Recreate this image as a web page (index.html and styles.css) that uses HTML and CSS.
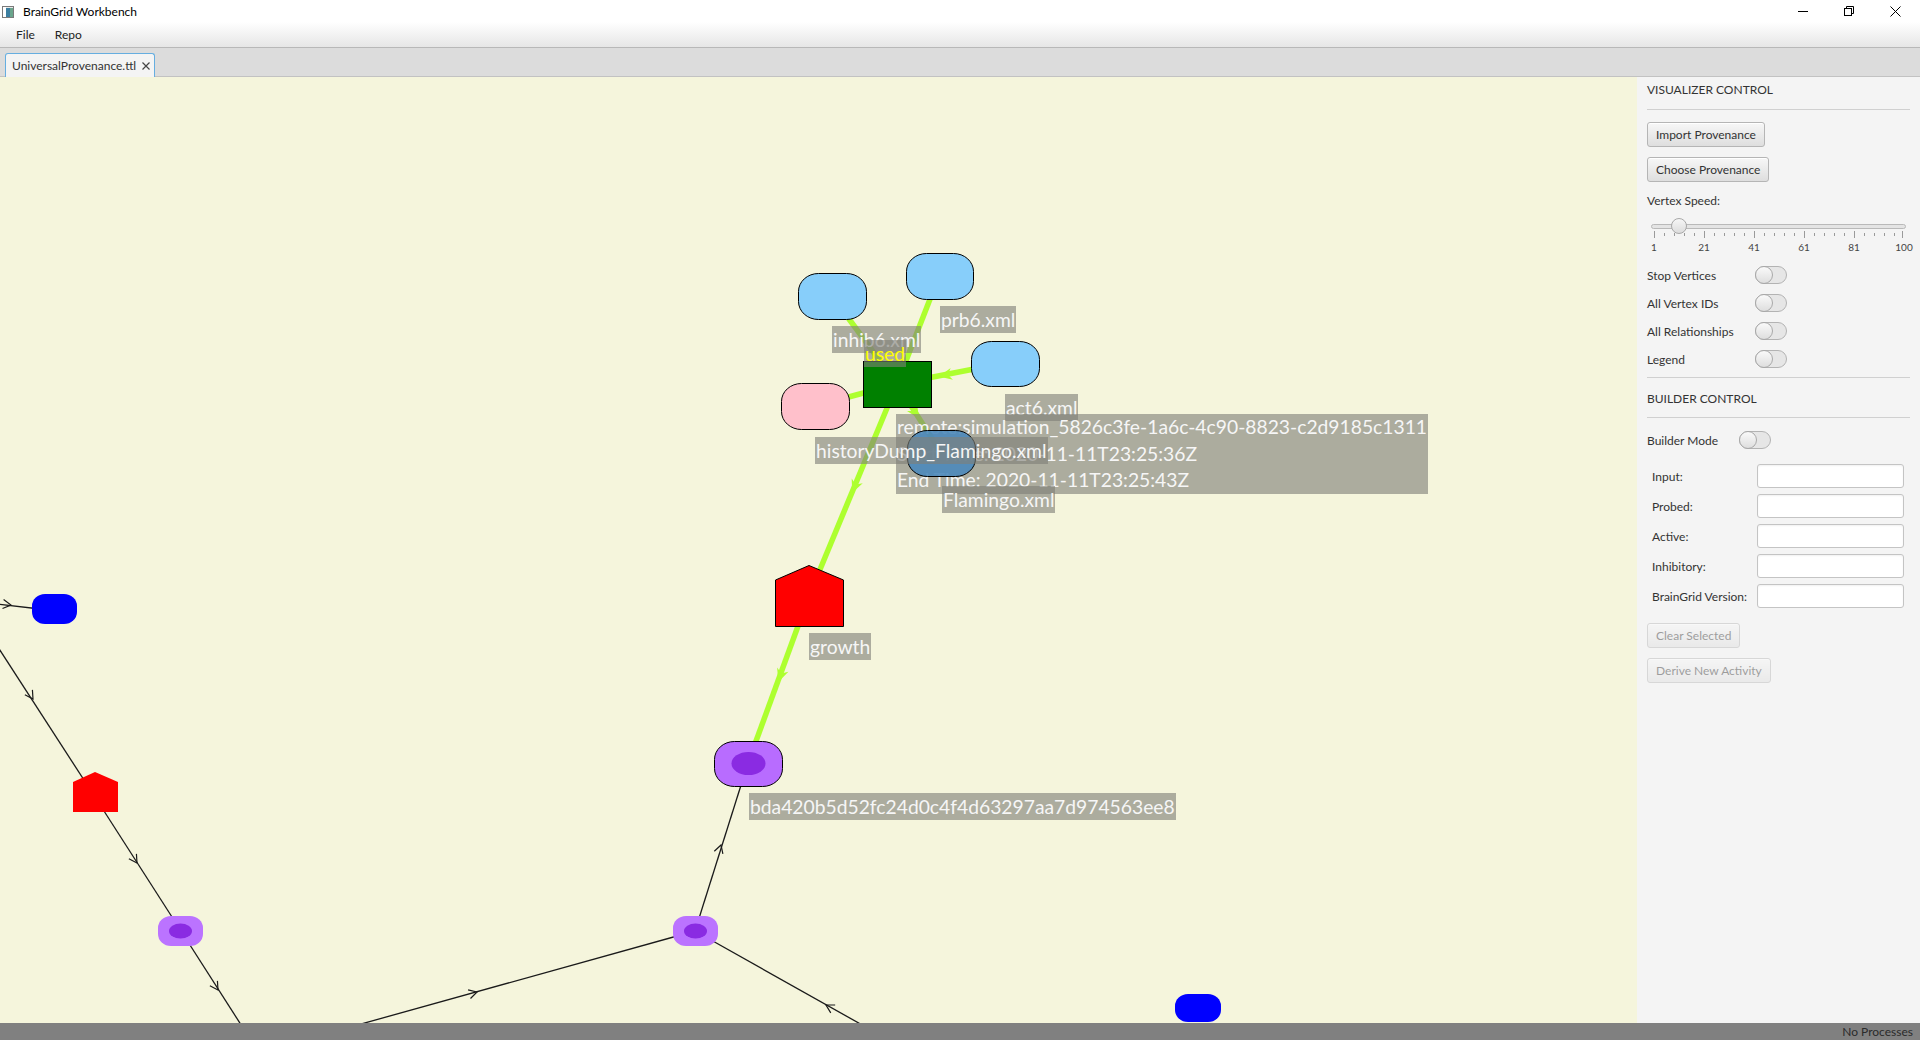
FILE: index.html
```html
<!DOCTYPE html>
<html>
<head>
<meta charset="utf-8">
<title>BrainGrid Workbench</title>
<link rel="stylesheet" href="styles.css">
</head>
<body>
<div class="app">
  <div class="titlebar">
    <svg class="app-icon" width="12" height="12" viewBox="0 0 12 12">
      <rect x="0.5" y="0.5" width="11" height="11" fill="#e8e8e8" stroke="#7a7a7a"/>
      <rect x="1" y="1" width="3" height="10" fill="#ffffff"/>
      <rect x="4" y="2" width="7" height="9" fill="#3c7fa0"/>
      <rect x="8" y="2" width="3" height="9" fill="#6aa58c"/>
    </svg>
    <span class="title">BrainGrid Workbench</span>
    <div class="win-controls">
      <span class="wc"><svg width="10" height="10" viewBox="0 0 10 10"><line x1="0" y1="5.5" x2="10" y2="5.5" stroke="#000" stroke-width="1"/></svg></span>
      <span class="wc"><svg width="10" height="10" viewBox="0 0 10 10"><rect x="0.5" y="2.5" width="7" height="7" fill="none" stroke="#000"/><path d="M2.5 2.5 V0.5 H9.5 V7.5 H7.5" fill="none" stroke="#000"/></svg></span>
      <span class="wc"><svg width="11" height="11" viewBox="0 0 11 11"><path d="M0.5 0.5 L10.5 10.5 M10.5 0.5 L0.5 10.5" stroke="#000" stroke-width="1"/></svg></span>
    </div>
  </div>
  <div class="menubar">
    <span class="menu">File</span>
    <span class="menu">Repo</span>
  </div>
  <div class="tabbar">
    <div class="tab">
      <span class="tab-text">UniversalProvenance.ttl</span>
      <svg class="tab-close" width="8" height="8" viewBox="0 0 8 8"><path d="M0.5 0.5 L7.5 7.5 M7.5 0.5 L0.5 7.5" stroke="#444" stroke-width="1.2"/></svg>
    </div>
  </div>
  <div class="main">
    <div class="canvas">
      <svg class="graph" width="1637" height="946" viewBox="0 0 1637 946">
        <defs>
          <path id="ga" d="M2 0 L-11 -6 L-7 0 L-11 6 Z" fill="#adff2f"/>
          <path id="ba" d="M-8 -4.5 L0 0 L-8 4.5" fill="none" stroke="#1a1a1a" stroke-width="1.2"/>
        </defs>
        <g stroke="#1a1a1a" stroke-width="1.3" fill="none">
          <line x1="-20" y1="525" x2="40" y2="532"/>
          <line x1="-30" y1="527" x2="95" y2="720"/>
          <line x1="95" y1="720" x2="181" y2="854"/>
          <line x1="181" y1="854" x2="245" y2="954"/>
          <line x1="300" y1="964" x2="695" y2="854"/>
          <line x1="695" y1="854" x2="748" y2="686"/>
          <line x1="695" y1="854" x2="880" y2="958"/>
        </g>
        <use href="#ba" transform="translate(11 528) rotate(7)"/>
        <use href="#ba" transform="translate(33 622) rotate(57)"/>
        <use href="#ba" transform="translate(137 786) rotate(57)"/>
        <use href="#ba" transform="translate(218 913) rotate(57)"/>
        <use href="#ba" transform="translate(477 915) rotate(-15.5)"/>
        <use href="#ba" transform="translate(721 768) rotate(-72.5)"/>
        <use href="#ba" transform="translate(826 928) rotate(-150.6)"/>

        <g stroke="#adff2f" stroke-width="5.5">
          <line x1="832" y1="219" x2="897" y2="307"/>
          <line x1="939" y1="199" x2="897" y2="307"/>
          <line x1="1005" y1="286" x2="897" y2="307"/>
          <line x1="815" y1="329" x2="897" y2="307"/>
          <line x1="897" y1="307" x2="942" y2="377"/>
          <line x1="897" y1="307" x2="809" y2="519"/>
          <line x1="809" y1="519" x2="748" y2="686"/>
        </g>
        <use href="#ga" transform="translate(853 414) rotate(112.5)"/>
        <use href="#ga" transform="translate(779 603) rotate(110)"/>
        <use href="#ga" transform="translate(918 340) rotate(57.5)"/>
        <use href="#ga" transform="translate(941 299) rotate(169)"/>

        <rect x="798.5" y="196.5" width="68" height="46" rx="20" ry="18" fill="#87cefa" stroke="#000"/>
        <rect x="906.5" y="176.5" width="67" height="46" rx="20" ry="18" fill="#87cefa" stroke="#000"/>
        <rect x="971.5" y="264.5" width="68" height="45" rx="20" ry="18" fill="#87cefa" stroke="#000"/>
        <rect x="781.5" y="306.5" width="68" height="46" rx="20" ry="18" fill="#ffc0cb" stroke="#000"/>
        <rect x="863.5" y="284.5" width="68" height="46" fill="#008000" stroke="#000"/>
        <polygon points="775.5,503 809,488.5 843.5,503 843.5,549.5 775.5,549.5" fill="#ff0000" stroke="#000"/>
        <rect x="714.5" y="664.5" width="68" height="45" rx="20" ry="18" fill="#b86cff" stroke="#000"/>
        <ellipse cx="748.5" cy="686.5" rx="17" ry="11.5" fill="#8a2be2"/>

        <rect x="32" y="517" width="45" height="30" rx="13" ry="12" fill="#0000ff"/>
        <polygon points="73,705 95,695 118,705 118,735 73,735" fill="#ff0000"/>
        <rect x="158" y="839" width="45" height="30" rx="13" ry="12" fill="#bb73ff"/>
        <ellipse cx="180.5" cy="854" rx="11.5" ry="7.5" fill="#8a2be2"/>
        <rect x="673" y="839" width="45" height="30" rx="13" ry="12" fill="#bb73ff"/>
        <ellipse cx="695.5" cy="854" rx="11.5" ry="7.5" fill="#8a2be2"/>
        <rect x="1175" y="917" width="46" height="28" rx="13" ry="12" fill="#0000ff"/>
      </svg>

      <div class="lbl" style="left:832px;top:249px">inhib6.xml</div>
      <div class="lbl used" style="left:864px;top:263px">used</div>
      <div class="lbl" style="left:940px;top:229px">prb6.xml</div>
      <div class="lbl" style="left:1005px;top:317px">act6.xml</div>
      <div class="lbl multi" style="left:896px;top:337px">remote:simulation_5826c3fe-1a6c-4c90-8823-c2d9185c1311<br>Start Time: 2020-11-11T23:25:36Z<br>End Time: 2020-11-11T23:25:43Z</div>
      <svg class="node-over" style="left:907px;top:353px" width="70" height="48" viewBox="0 0 70 48">
        <rect x="0.5" y="0.5" width="68" height="46" rx="20" ry="18" fill="#4b88ba" fill-opacity="0.9" stroke="#000"/>
      </svg>
      <div class="lbl" style="left:815px;top:360px">historyDump_Flamingo.xml</div>
      <div class="lbl" style="left:942px;top:409px">Flamingo.xml</div>
      <div class="lbl" style="left:809px;top:556px">growth</div>
      <div class="lbl" style="left:749px;top:716px">bda420b5d52fc24d0c4f4d63297aa7d974563ee8</div>
    </div>

    <aside class="panel">
      <div class="sec-title">VISUALIZER CONTROL</div>
      <div class="sep"></div>
      <button class="btn btn-first">Import Provenance</button>
      <button class="btn">Choose Provenance</button>
      <div class="speed-label">Vertex Speed:</div>
      <div class="slider">
        <div class="track"></div>
        <div class="thumb"></div>
        <svg class="ticks" width="263" height="7" viewBox="0 0 263 7">
          <g stroke="#9a9a9a" stroke-width="1">
            <path d="M7.5 0 V7 M57.5 0 V7 M107.5 0 V7 M157.5 0 V7 M207.5 0 V7 M255.5 0 V7"/>
            <path d="M17.5 2 V5 M27.5 2 V5 M37.5 2 V5 M47.5 2 V5 M67.5 2 V5 M77.5 2 V5 M87.5 2 V5 M97.5 2 V5 M117.5 2 V5 M127.5 2 V5 M137.5 2 V5 M147.5 2 V5 M167.5 2 V5 M177.5 2 V5 M187.5 2 V5 M197.5 2 V5 M217.5 2 V5 M227.5 2 V5 M237.5 2 V5 M247.5 2 V5"/>
          </g>
        </svg>
        <div class="tick-labels">
          <span>1</span><span>21</span><span>41</span><span>61</span><span>81</span><span>100</span>
        </div>
      </div>
      <div class="toggle-list">
        <div class="toggle-row"><span>Stop Vertices</span><span class="toggle"><span class="knob"></span></span></div>
        <div class="toggle-row"><span>All Vertex IDs</span><span class="toggle"><span class="knob"></span></span></div>
        <div class="toggle-row"><span>All Relationships</span><span class="toggle"><span class="knob"></span></span></div>
        <div class="toggle-row"><span>Legend</span><span class="toggle"><span class="knob"></span></span></div>
      </div>
      <div class="sep sep-a"></div>
      <div class="sec-title sec-b">BUILDER CONTROL</div>
      <div class="sep"></div>
      <div class="toggle-row builder"><span>Builder Mode</span><span class="toggle"><span class="knob"></span></span></div>
      <div class="field-grid">
        <label>Input:</label><input type="text" class="field">
        <label>Probed:</label><input type="text" class="field">
        <label>Active:</label><input type="text" class="field">
        <label>Inhibitory:</label><input type="text" class="field">
        <label>BrainGrid Version:</label><input type="text" class="field">
      </div>
      <button class="btn btn-disabled btn-clear">Clear Selected</button>
      <button class="btn btn-disabled">Derive New Activity</button>
    </aside>
  </div>
  <div class="statusbar">No Processes</div>
</div>
</body>
</html>
```
FILE: styles.css
```css
* { box-sizing: border-box; }
html, body { margin: 0; padding: 0; }
body {
  width: 1920px;
  height: 1040px;
  overflow: hidden;
  font-family: "Segoe UI", Lato, "Open Sans", sans-serif;
  font-size: 12px;
  color: #333;
  background: #f4f4f4;
}
.app { display: flex; flex-direction: column; height: 1040px; }

.titlebar {
  height: 22px;
  flex: 0 0 22px;
  background: #fff;
  display: flex;
  align-items: center;
}
.app-icon { margin-left: 2px; margin-top: 1px; }
.title { margin-left: 9px; color: #000; font-size: 12px; }
.win-controls { margin-left: auto; margin-right: 2px; display: flex; }
.wc { width: 46px; height: 22px; display: flex; align-items: center; justify-content: center; }

.menubar {
  flex: 0 0 26px;
  height: 26px;
  display: flex;
  align-items: center;
  padding-left: 6px;
  background: linear-gradient(#ffffff, #e6e6e6);
  border-bottom: 1px solid #b8b8b8;
}
.menu { padding: 0 10px; color: #222; }

.tabbar {
  flex: 0 0 29px;
  height: 29px;
  background: #dcdcdc;
  border-bottom: 1px solid #c2c2c2;
  padding: 5px 0 0 5px;
  display: flex;
  align-items: flex-start;
}
.tab {
  height: 24px;
  width: 150px;
  display: flex;
  align-items: center;
  padding-left: 6px;
  background: #f4f4f4;
  border: 1px solid #66aee0;
  border-bottom: none;
  border-radius: 3px 3px 0 0;
  color: #333;
}
.tab-close { margin-left: 6px; }

.main { flex: 1 1 auto; display: flex; min-height: 0; }
.canvas {
  flex: 0 0 1637px;
  width: 1637px;
  position: relative;
  overflow: hidden;
  background: #f5f5dc;
}
.graph { display: block; }
.node-over { position: absolute; }
.lbl {
  position: absolute;
  white-space: nowrap;
  background: rgba(128, 128, 120, 0.62);
  color: #f6f6f6;
  font-family: "Segoe UI", Lato, "Open Sans", sans-serif;
  font-size: 19.3px;
  line-height: 27px;
  padding: 0 1px;
}
.lbl.used { color: #ffff00; }
.lbl.multi { line-height: 26.5px; }

.panel {
  flex: 1 1 auto;
  background: #f4f4f4;
  padding: 5px 10px 0 10px;
  display: flex;
  flex-direction: column;
  align-items: flex-start;
}
.sec-title { line-height: 16px; height: 16px; color: #333; }
.sec-b { margin-top: 13px; }
.sep { align-self: stretch; height: 1px; background: #d0d0d0; margin-top: 11px; }
.sep-a { margin-top: 4px; }
.sec-b + .sep { margin-top: 10px; }

.btn {
  font-family: inherit;
  font-size: 12px;
  color: #333;
  height: 25px;
  padding: 0 8px;
  margin: 10px 0 0 0;
  border: 1px solid #b5b5b5;
  border-radius: 3px;
  background: linear-gradient(#f7f7f7, #dedede);
  box-shadow: inset 0 1px 0 #ffffff;
}
.btn-first { margin-top: 12px; }
.btn-disabled { opacity: 0.45; }
.btn-clear { margin-top: 15px; }

.speed-label { margin-top: 11px; line-height: 16px; }
.slider { position: relative; align-self: stretch; height: 40px; margin-top: 7px; }
.track {
  position: absolute;
  left: 4px; right: 4px; top: 8px;
  height: 5px;
  border-radius: 3px;
  background: #e4e4e4;
  border: 1px solid #b9b9b9;
}
.thumb {
  position: absolute;
  left: 24px; top: 2px;
  width: 16px; height: 16px;
  border-radius: 50%;
  border: 1px solid #a8a8a8;
  background: linear-gradient(#f6f6f6, #dcdcdc);
}
.ticks { position: absolute; left: 0; top: 15px; }
.tick-labels {
  position: absolute;
  top: 23px;
  left: -18px;
  display: flex;
  font-size: 10px;
  line-height: 16px;
  color: #444;
}
.tick-labels span { width: 50px; text-align: center; }

.toggle-list { margin-top: 5px; align-self: stretch; }
.toggle-row {
  display: grid;
  grid-template-columns: 108px 32px;
  align-items: center;
  height: 28px;
}
.toggle-row.builder { grid-template-columns: 92px 32px; margin-top: 8px; }
.toggle {
  position: relative;
  width: 32px; height: 18px;
  border-radius: 9px;
  border: 1px solid #b3b3b3;
  background: #e6e6e6;
  display: block;
}
.knob {
  position: absolute;
  left: -1px; top: -1px;
  width: 18px; height: 18px;
  border-radius: 50%;
  border: 1px solid #a9a9a9;
  background: linear-gradient(#fafafa, #dedede);
}

.field-grid {
  margin-top: 10px;
  padding-left: 5px;
  display: grid;
  grid-template-columns: 105px 147px;
  row-gap: 6px;
  align-items: center;
}
.field-grid label { color: #333; }
.field {
  width: 147px;
  height: 24px;
  margin: 0;
  padding: 0 6px;
  border: 1px solid #c4c4c4;
  border-radius: 3px;
  background: #fff;
  box-shadow: inset 0 1px 2px rgba(0,0,0,0.06);
  font-family: inherit;
  font-size: 12px;
}

.statusbar {
  flex: 0 0 17px;
  height: 17px;
  background: #808080;
  color: #2b2b2b;
  text-align: right;
  padding-right: 7px;
  line-height: 17px;
  font-size: 12px;
}
```
